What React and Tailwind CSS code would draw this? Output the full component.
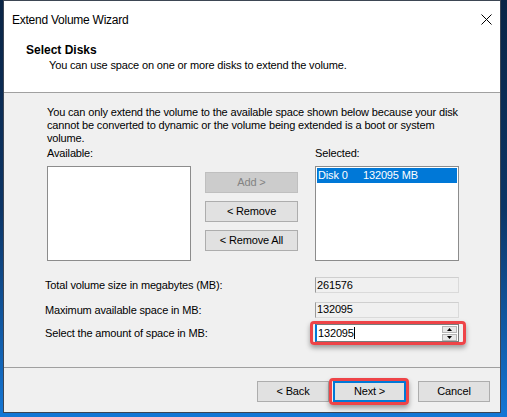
import React from 'react'

function WinButton({ children, disabled, className = '' }) {
  return (
    <div
      className={`h-[21px] flex items-center justify-center border ${
        disabled ? 'bg-[#cccccc] border-[#bfbfbf] text-[#838383]' : 'bg-[#e1e1e1] border-[#adadad] text-black'
      } ${className}`}
    >
      {children}
    </div>
  )
}

function ReadOnlyField({ value }) {
  return (
    <div className="w-[144px] h-[16px] bg-[#f0f0f0] border border-[#dadada] border-l-[#9a9a9a] border-t-[#cfcfcf] flex items-center pl-[1px] leading-none">
      {value}
    </div>
  )
}

function Highlight({ className }) {
  return (
    <div
      className={`absolute pointer-events-none rounded-[4px] border-[3px] border-[#ee4448] shadow-[0_3px_5px_rgba(0,0,0,0.35)] ${className}`}
    />
  )
}

export default function App() {
  return (
    <div className="w-[507px] h-[417px] overflow-hidden pl-[3px] bg-gradient-to-b from-[#0a2546] via-[#0c3566] to-[#1477d6] font-['Liberation_Sans',Arial,sans-serif] text-[11px] tracking-[-0.15px] text-black">
      <div className="w-[498px] h-[413px] border border-[#3d4654] bg-[#f0f0f0] flex flex-col">
        {/* title bar */}
        <div className="h-[37px] shrink-0 bg-white flex items-center justify-between pl-[8px] pr-[8px]">
          <span className="text-[12px] tracking-[-0.25px]">Extend Volume Wizard</span>
          <svg width="11" height="11" viewBox="0 0 11 11" className="mb-[1px]">
            <path d="M0.5 0.5 L10.5 10.5 M10.5 0.5 L0.5 10.5" stroke="#000" strokeWidth="1" />
          </svg>
        </div>

        {/* header */}
        <div className="h-[55px] shrink-0 bg-white border-b border-[#a0a0a0] pl-[22px] pt-[5px]">
          <div className="text-[12px] font-bold tracking-normal leading-[15px]">Select Disks</div>
          <div className="pl-[23px] leading-[15px]">You can use space on one or more disks to extend the volume.</div>
        </div>

        {/* body */}
        <div className="flex-1 flex flex-col">
          <div className="pt-[13px] pl-[43px]">
            <p className="leading-[13px]">
              You can only extend the volume to the available space shown below because your disk
              <br />
              cannot be converted to dynamic or the volume being extended is a boot or system
              <br />
              volume.
            </p>

            <div className="mt-[2px] flex">
              <div className="w-[144px] flex flex-col">
                <div className="leading-[13px]">Available:</div>
                <div className="mt-[6px] h-[95px] bg-white border border-[#8c8c8c]" />
              </div>

              <div className="ml-[14px] w-[93px] pt-[25px] flex flex-col gap-[8px]">
                <WinButton disabled>Add &gt;</WinButton>
                <WinButton>&lt; Remove</WinButton>
                <WinButton>&lt; Remove All</WinButton>
              </div>

              <div className="ml-[17px] w-[144px] flex flex-col">
                <div className="leading-[13px]">Selected:</div>
                <div className="mt-[6px] h-[95px] bg-white border border-[#8c8c8c] p-[1px]">
                  <div className="h-[15px] bg-[#0078d7] text-white flex items-center pl-[1px] leading-none">
                    <span className="w-[45px]">Disk 0</span>
                    <span>132095 MB</span>
                  </div>
                </div>
              </div>
            </div>
          </div>

          <div className="mt-[16px] pl-[41px] flex flex-col gap-[8px]">
            <div className="flex items-center">
              <span className="w-[270px]">Total volume size in megabytes (MB):</span>
              <ReadOnlyField value="261576" />
            </div>
            <div className="flex items-center">
              <span className="w-[270px]">Maximum available space in MB:</span>
              <ReadOnlyField value="132095" />
            </div>
            <div className="flex items-center -mt-[2px]">
              <span className="w-[270px]">Select the amount of space in MB:</span>
              <div className="relative w-[144px] h-[18px]">
                <div className="w-full h-full bg-white border border-[#7a7a7a] border-l-[2px] border-l-[#0078d7] flex items-center">
                  <span className="pl-[1px] leading-none">132095</span>
                  <span className="w-[1px] h-[12px] bg-black" />
                  <div className="ml-auto mr-[1px] w-[15px] h-[15px] flex flex-col gap-[1px]">
                    <div className="h-[7px] bg-[#e8e8e8] border border-[#b5b5b5] flex items-center justify-center">
                      <svg width="5" height="3" viewBox="0 0 5 3">
                        <path d="M2.5 0 L5 3 L0 3 Z" fill="#000" />
                      </svg>
                    </div>
                    <div className="h-[7px] bg-[#e8e8e8] border border-[#b5b5b5] flex items-center justify-center">
                      <svg width="5" height="3" viewBox="0 0 5 3">
                        <path d="M0 0 L5 0 L2.5 3 Z" fill="#000" />
                      </svg>
                    </div>
                  </div>
                </div>
                <Highlight className="-left-[5px] -top-[3px] -right-[7px] -bottom-[3px]" />
              </div>
            </div>
          </div>

          <div className="mt-[25px] h-[1px] bg-[#a0a0a0]" />

          <div className="pt-[13px] pr-[10px] flex justify-end">
            <WinButton className="w-[72px]">&lt; Back</WinButton>
            <div className="relative ml-[4px]">
              <div className="w-[73px] h-[21px] flex items-center justify-center bg-[#e1e1e1] border-2 border-[#0078d7]">
                Next &gt;
              </div>
              <Highlight className="-left-[4px] -top-[3px] -right-[3px] -bottom-[3px]" />
            </div>
            <WinButton className="w-[72px] ml-[12px]">Cancel</WinButton>
          </div>
        </div>
      </div>
    </div>
  )
}
